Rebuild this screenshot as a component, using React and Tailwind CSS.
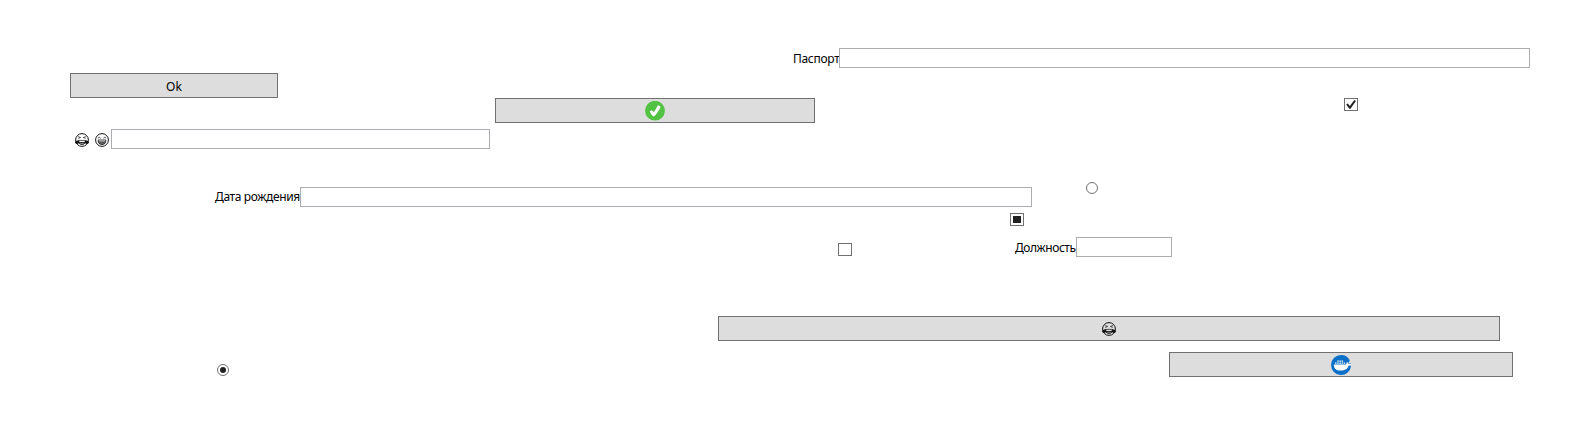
function Button({ className, children }) {
  return (
    <button className={`flex h-[25px] shrink-0 items-center justify-center border border-[#707070] bg-[#dddddd] ${className}`}>
      {children}
    </button>
  );
}

function Field({ label, labelClass, inputClass, className = "" }) {
  return (
    <label className={`flex h-5 shrink-0 items-center ${className}`}>
      <span className={`shrink-0 whitespace-nowrap leading-5 ${labelClass}`}>{label}</span>
      <input className={`h-5 shrink-0 border border-[#abadb3] bg-white outline-none ${inputClass}`} />
    </label>
  );
}

function CheckBox({ state, className }) {
  return (
    <span className={`flex h-[13px] w-3.5 shrink-0 items-center justify-center border border-[#707070] bg-white ${className}`}>
      {state === "checked" && (
        <svg width="12" height="11" viewBox="0 0 12 11">
          <path d="M1.2 5.6 2.8 4.6 4.9 6.9 9.3 1 10.9 2.1 5.5 9.8H4.3Z" fill="#212121" />
        </svg>
      )}
      {state === "mixed" && <span className="h-[7px] w-2 bg-[#212121]" />}
    </span>
  );
}

function Radio({ checked, className }) {
  return (
    <span className={`flex size-3 shrink-0 items-center justify-center rounded-full border border-[#707070] bg-white ${className}`}>
      {checked && <span className="size-1.5 rounded-full bg-[#212121]" />}
    </span>
  );
}

function Rofl({ className = "" }) {
  return (
    <svg className={`shrink-0 ${className}`} width="14" height="14" viewBox="0 0 14 14" fill="none" stroke="#111">
      <circle cx="7" cy="7" r="6.4" strokeWidth="1" />
      <path d="M3.2 3.6 5.6 4.5 3.2 5.4M10.8 3.6 8.4 4.5 10.8 5.4" strokeWidth="0.7" />
      <path d="M3.6 7.4H10.4L10 9.6H4Z" strokeWidth="0.7" />
      <path d="M3.8 9.7H10.2Q9 11.6 7 11.6 5 11.6 3.8 9.7Z" fill="#111" fillOpacity="0.35" strokeWidth="0.8" />
      <path d="M3.7 7.2C1.8 7.4 0 8.2 0 9.6 0.5 11.4 3.9 11.6 4.3 9ZM10.3 7.2C12.2 7.4 14 8.2 14 9.6 13.5 11.4 10.1 11.6 9.7 9Z" fill="#111" stroke="none" />
    </svg>
  );
}

function Grin({ className = "" }) {
  return (
    <svg className={`shrink-0 ${className}`} width="14" height="14" viewBox="0 0 14 14" fill="none" stroke="#111">
      <circle cx="7" cy="7" r="6.4" strokeWidth="1" />
      <path d="M3 5.2Q4.3 3.4 5.6 5.2M8.4 5.2Q9.7 3.4 11 5.2" strokeWidth="0.8" />
      <path d="M3.1 7H10.9Q10.7 11.6 7 11.6 3.3 11.6 3.1 7Z" strokeWidth="0.8" />
      <path d="M3.3 9H10.7" strokeWidth="1" />
      <path d="M4 10.3H10M5.2 9V11M7 9V11.4M8.8 9V11" strokeWidth="0.6" />
    </svg>
  );
}

function CheckCircle() {
  return (
    <svg width="20" height="20" viewBox="0 0 20 20">
      <circle cx="10" cy="9.7" r="9.9" fill="#52c242" />
      <path d="M4.7 10.4 6.3 9.2 9 11 13 4.3 15.3 5.3V7.2L10.6 14 8.6 15.6 7 14.2Z" fill="#fff" />
    </svg>
  );
}

function Whale() {
  return (
    <svg width="20" height="20" viewBox="0 0 20 20">
      <path d="M10 0A10 10 0 0 1 18.8 5.2L17.4 8.2H20V11.2A10 10 0 1 1 10 0Z" fill="#0b6fc7" />
      <path d="M2.8 9.4H14.8C15.9 9.1 15.2 8 16 7 16.9 7.5 17.2 8.2 17.3 8.7H20V10.4H17.6C16.8 14 13.8 15.4 9.6 15.4 5.2 15.4 2.8 13.4 2.8 9.4Z" fill="#fff" />
      <path d="M4 7.4H5.5V8.8H4ZM6.2 7.4H7.7V8.8H6.2ZM8.4 7.4H9.9V8.8H8.4ZM10.6 7.4H12.1V8.8H10.6ZM12.8 7.4H14.1V8.8H12.8ZM6.2 5.6H7.7V6.8H6.2ZM8.4 5.6H9.9V6.8H8.4ZM10.6 5.6H12.1V6.8H10.6Z" fill="#fff" />
    </svg>
  );
}

export default function App() {
  return (
    <main className="flex h-[431px] w-[1570px] flex-col overflow-hidden bg-white pt-12 font-['Noto_Sans','Open_Sans',sans-serif] text-xs text-black">
      <Field label="Паспорт" className="ml-[793px]" labelClass="w-[46px] pt-0.5 tracking-[-0.3px]" inputClass="w-[691px]" />

      <div className="mt-[5px] flex h-[76px] items-start">
        <div className="ml-[70px] flex w-[420px] flex-col">
          <Button className="w-[208px] pt-0.5">Ok</Button>
          <div className="mt-[31px] flex h-5 items-center">
            <Rofl className="mt-0.5 ml-[5px]" />
            <Grin className="mt-0.5 ml-1.5" />
            <input className="ml-[2px] h-5 w-[379px] shrink-0 border border-[#abadb3] bg-white outline-none" />
          </div>
        </div>
        <Button className="mt-[25px] ml-[5px] w-80"><CheckCircle /></Button>
        <CheckBox state="checked" className="mt-[25px] ml-[529px]" />
      </div>

      <div className="mt-[33px] flex h-[25px] items-start">
        <Field label="Дата рождения" className="mt-[5px] ml-[215px]" labelClass="w-[85px] tracking-[-0.36px]" inputClass="w-[732px]" />
        <Radio className="ml-[54px]" />
      </div>
      <div className="mt-[6px] flex h-[13px]">
        <CheckBox state="mixed" className="ml-[1010px]" />
      </div>
      <div className="mt-[11px] flex h-5 items-start">
        <CheckBox className="mt-[6px] ml-[838px]" />
        <Field label="Должность" className="ml-[162px]" labelClass="w-[62px] pt-0.5 pl-px tracking-[-0.44px]" inputClass="w-24" />
      </div>

      <Button className="mt-[59px] ml-[718px] w-[782px]"><Rofl /></Button>
      <div className="mt-[11px] flex h-[25px] items-start">
        <Radio checked className="mt-3 ml-[217px]" />
        <Button className="ml-[940px] w-[344px]"><Whale /></Button>
      </div>
    </main>
  );
}
